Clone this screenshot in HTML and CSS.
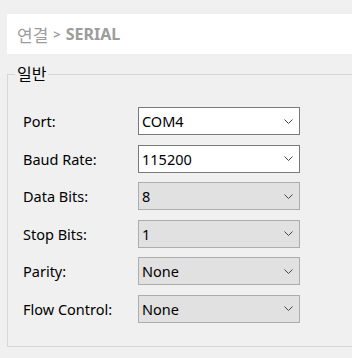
FILE: index.html
```html
<!DOCTYPE html>
<html lang="ko">
<head>
  <meta charset="UTF-8" />
  <title>연결 설정</title>
  <link rel="stylesheet" href="styles.css">
</head>
<body>
  <!-- 경로 표시 -->
  <div class="crumb"><span class="ko">연결</span> <span class="sep">&gt;</span> SERIAL</div>

  <!-- 일반 설정 -->
  <fieldset class="group">
    <legend>일반</legend>
    <div class="form">
      <label>Port:</label>
      <div class="combo">
        <span>COM4</span>
        <svg class="arrow" width="9" height="5" viewBox="0 0 9 5"><path d="M0.5 0.5 L4.5 4.5 L8.5 0.5" /></svg>
      </div>

      <label>Baud Rate:</label>
      <div class="combo">
        <span>115200</span>
        <svg class="arrow" width="9" height="5" viewBox="0 0 9 5"><path d="M0.5 0.5 L4.5 4.5 L8.5 0.5" /></svg>
      </div>

      <label>Data Bits:</label>
      <div class="combo disabled">
        <span>8</span>
        <svg class="arrow" width="9" height="5" viewBox="0 0 9 5"><path d="M0.5 0.5 L4.5 4.5 L8.5 0.5" /></svg>
      </div>

      <label>Stop Bits:</label>
      <div class="combo disabled">
        <span>1</span>
        <svg class="arrow" width="9" height="5" viewBox="0 0 9 5"><path d="M0.5 0.5 L4.5 4.5 L8.5 0.5" /></svg>
      </div>

      <label>Parity:</label>
      <div class="combo disabled">
        <span>None</span>
        <svg class="arrow" width="9" height="5" viewBox="0 0 9 5"><path d="M0.5 0.5 L4.5 4.5 L8.5 0.5" /></svg>
      </div>

      <label>Flow Control:</label>
      <div class="combo disabled">
        <span>None</span>
        <svg class="arrow" width="9" height="5" viewBox="0 0 9 5"><path d="M0.5 0.5 L4.5 4.5 L8.5 0.5" /></svg>
      </div>
    </div>
  </fieldset>
</body>
</html>
```

FILE: styles.css
```css
body {
  font-family: 'Noto Sans', 'Noto Sans CJK KR', sans-serif;
  background-color: #f0f0f0;
  margin: 0;
  padding: 0;
  color: #000;
}

.crumb {
  margin: 14px 0 0 7px;
  height: 40px;
  padding-left: 10px;
  background: #fff;
  display: flex;
  align-items: center;
  gap: 5px;
  font-size: 16px;
  font-weight: bold;
  color: #9c9c9c;
}

.crumb .ko {
  font-weight: normal;
  font-size: 17px;
}

.crumb .sep {
  font-size: 13px;
}

.group {
  margin: 11px 0 0 7px;
  padding: 0 0 23px 15px;
  border: 1px solid #d7d7d7;
  border-right: none;
}

.group legend {
  margin-left: -8px;
  padding: 0 2px;
  font-size: 16px;
  line-height: 18px;
}

.form {
  display: grid;
  grid-template-columns: 115px 162px;
  row-gap: 9.5px;
  align-items: center;
  padding-top: 24px;
}

.form label {
  font-size: 14.5px;
}

.combo {
  height: 28px;
  box-sizing: border-box;
  border: 1px solid #7a7a7a;
  background: #fff;
  display: flex;
  align-items: center;
  justify-content: space-between;
  padding: 0 6px 0 3px;
  font-size: 14.5px;
}

.combo.disabled {
  background: #e1e1e1;
  border-color: #adadad;
}

.arrow path {
  fill: none;
  stroke: #444;
  stroke-width: 1;
}
```
